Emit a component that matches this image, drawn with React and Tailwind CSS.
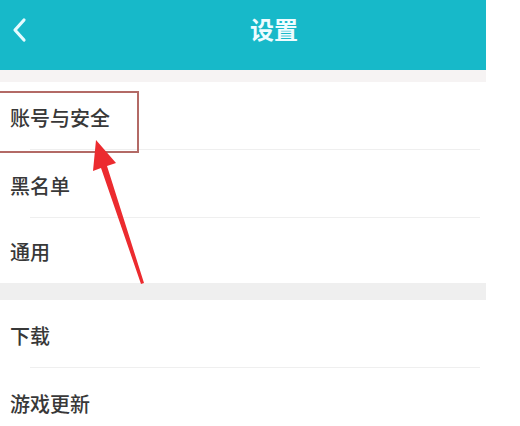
import React from "react";

const font = { fontFamily: '"Noto Sans CJK SC", "Noto Sans", sans-serif' };

function Row({ label, divider, short }) {
  return (
    <div className={`relative ${short ? "h-[65px]" : "h-[68px]"} flex items-center pl-[10px] pt-[3px] bg-white`}>
      <span className="text-[20px] font-medium text-[#383838] leading-none">{label}</span>
      {divider && <div className="absolute bottom-0 left-[30px] right-[6px] h-px bg-[#efefef]" />}
    </div>
  );
}

export default function App() {
  return (
    <div className="relative w-[520px] h-[426px] bg-white overflow-hidden" style={font}>
      <div className="w-[486px]">
        <div className="relative h-[70px] bg-[#17b9c9] flex items-center">
          <svg className="absolute left-[11px] top-[17px]" width="18" height="26" viewBox="0 0 18 26">
            <path d="M13 3 L4 13 L13 23" fill="none" stroke="#e6fbff" strokeWidth="3.2" strokeLinecap="round" strokeLinejoin="round" />
          </svg>
          <div className="absolute left-[250px] top-0 h-full flex items-center pb-[12px]">
            <span className="text-[24px] font-semibold text-[#eefcff] leading-none">设置</span>
          </div>
        </div>
        <div className="h-[12px] bg-[#f6f3f3]" />
        <Row label="账号与安全" divider />
        <Row label="黑名单" divider />
        <Row label="通用" short />
        <div className="h-[17px] bg-[#efefef]" />
        <Row label="下载" divider />
        <Row label="游戏更新" />
      </div>
      <div className="absolute left-[-4px] top-[91px] w-[143px] h-[62px] border-2 border-[#b36a66]" />
      <svg className="absolute left-0 top-0 pointer-events-none" width="520" height="426" viewBox="0 0 520 426">
        <path d="M144 283 L107 166 L116 163 L96 140 L93 171 L101 168 L141 284 Z" fill="#ec2b2f" />
      </svg>
    </div>
  );
}
